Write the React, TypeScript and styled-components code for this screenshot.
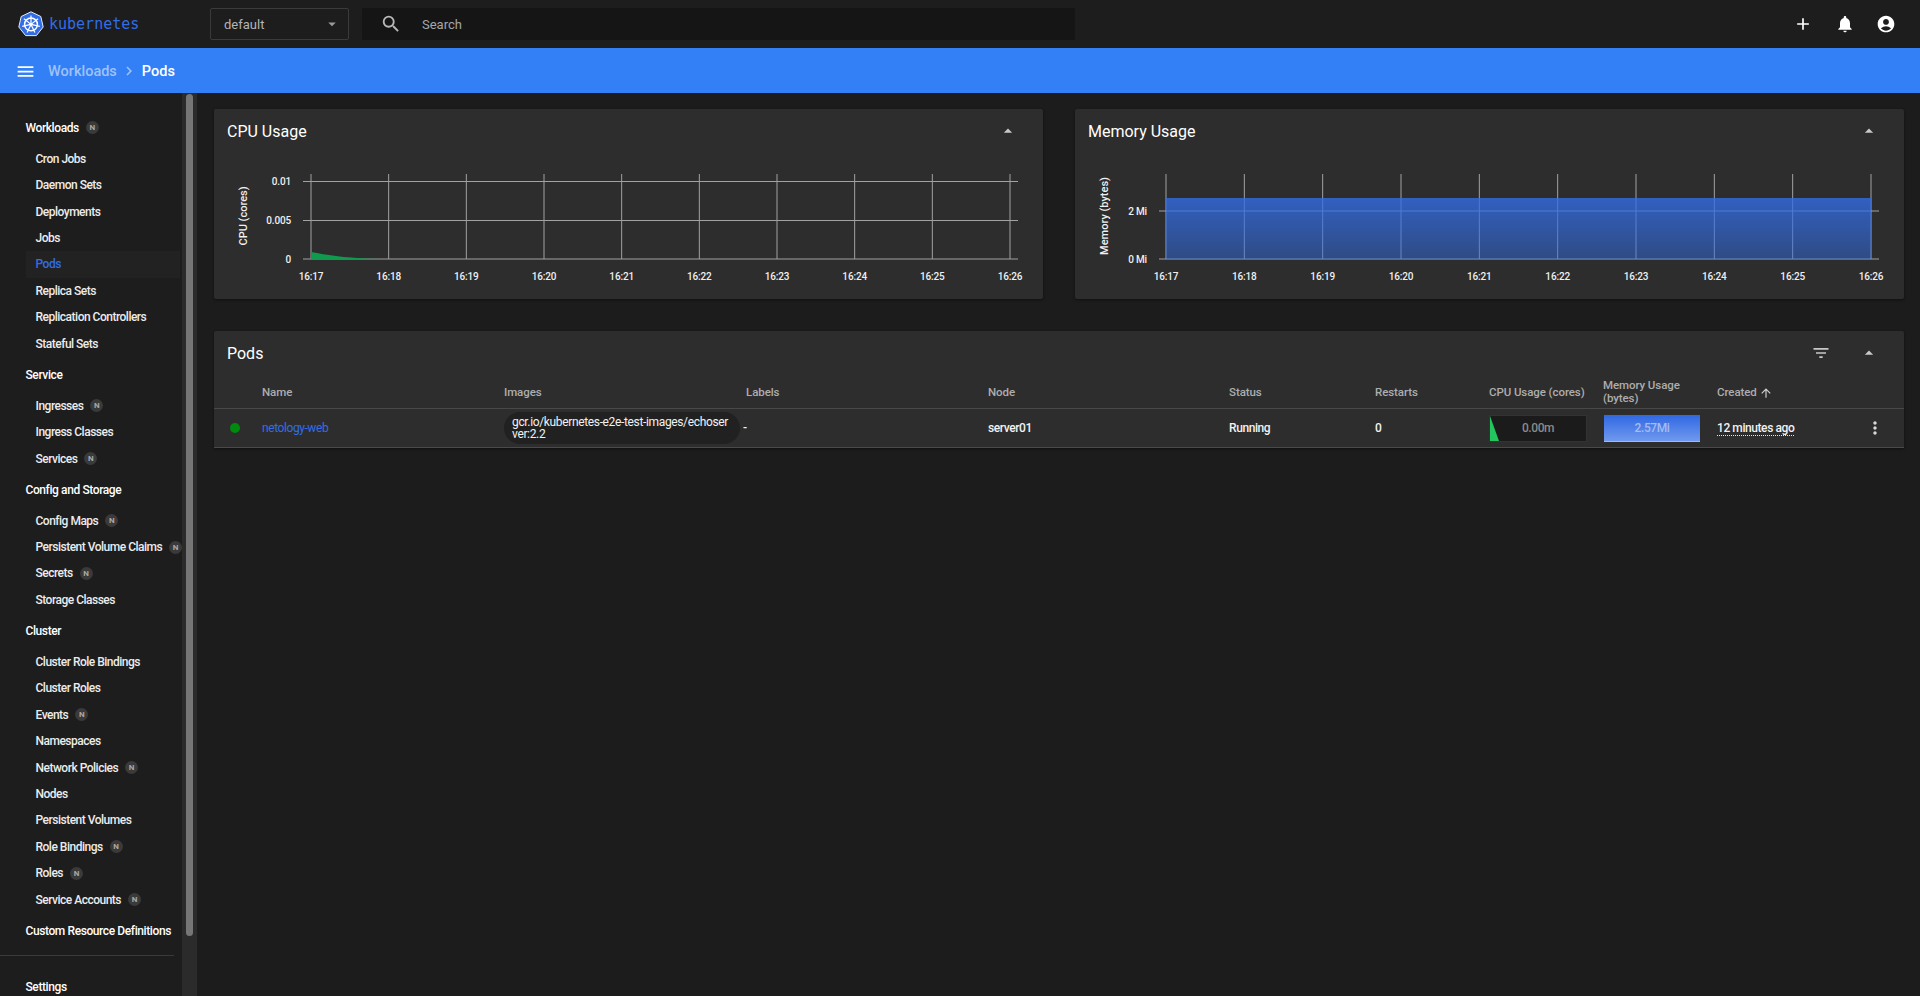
import React from "react";
import styled, { createGlobalStyle } from "styled-components";
import {
  MdAccountCircle,
  MdAdd,
  MdArrowDropDown,
  MdArrowDropUp,
  MdArrowUpward,
  MdChevronRight,
  MdFilterList,
  MdMenu,
  MdMoreVert,
  MdNotifications,
  MdSearch,
} from "react-icons/md";

const GlobalStyle = createGlobalStyle`
  html, body {
    margin: 0;
    height: 996px;
    overflow: hidden;
    background: #1c1c1c;
    font-family: Roboto, "Liberation Sans", sans-serif;
    color: #fff;
  }
  * { box-sizing: border-box; }
`;

const Page = styled.div`
  display: flex;
  flex-direction: column;
  height: 996px;
  overflow: hidden;
`;

const TopBar = styled.header`
  display: flex;
  align-items: center;
  height: 48px;
  flex: none;
  background: #1d1d1d;
`;

const Brand = styled.div`
  display: flex;
  align-items: center;
  gap: 5px;
  width: 210px;
  padding-left: 18px;
  flex: none;
  color: #326de6;
  font: 400 15px "DejaVu Sans Mono", monospace;
`;

const NamespaceSelect = styled.div`
  display: flex;
  align-items: center;
  justify-content: space-between;
  width: 139px;
  height: 32px;
  padding: 0 7px 0 13px;
  flex: none;
  border: 1px solid #3a3a3a;
  border-radius: 2px;
  font-size: 13px;
  color: #b4b4b4;
  svg { font-size: 18px; color: #9a9a9a; }
`;

const SearchBox = styled.div`
  display: flex;
  align-items: center;
  gap: 20px;
  width: 713px;
  height: 32px;
  margin-left: 13px;
  padding-left: 18px;
  flex: none;
  border-radius: 2px;
  background: #151515;
  font-size: 13px;
  color: #a6a6a6;
  svg { font-size: 22px; color: #b8b8b8; }
`;

const TopActions = styled.div`
  display: flex;
  align-items: center;
  gap: 21.5px;
  margin-left: auto;
  padding-right: 24px;
  font-size: 20px;
  svg { display: block; }
`;

const BreadcrumbBar = styled.div`
  display: flex;
  align-items: center;
  height: 45px;
  flex: none;
  padding: 1px 0 0 15px;
  background: #337ff5;
  font-size: 14.5px;
  font-weight: 500;
`;

const MenuButton = styled(MdMenu)`
  font-size: 21px;
  margin-right: 12px;
`;

const Crumb = styled.span<{ $current?: boolean }>`
  color: ${(p) => (p.$current ? "#fff" : "#9ec2fa")};
`;

const CrumbArrow = styled(MdChevronRight)`
  font-size: 18px;
  margin: 0 3.5px;
  color: #9ec2fa;
`;

const Body = styled.div`
  display: flex;
  flex: 1;
  min-height: 0;
`;

const Sidebar = styled.nav`
  width: 182px;
  flex: none;
  padding-top: 17px;
  background: #1d1d1d;
`;

const SectionTitle = styled.div<{ $spaced?: boolean }>`
  display: flex;
  align-items: center;
  height: 35.6px;
  padding-left: 25.5px;
  margin-top: ${(p) => (p.$spaced ? "14px" : "0")};
  font-size: 12px;
  font-weight: 500;
  letter-spacing: -0.4px;
`;

const NavItem = styled.div<{ $active?: boolean }>`
  display: flex;
  align-items: center;
  height: 26.43px;
  margin-left: 26px;
  width: 154px;
  padding-left: 9.5px;
  white-space: nowrap;
  font-size: 12px;
  font-weight: 500;
  letter-spacing: -0.5px;
  color: ${(p) => (p.$active ? "#326de6" : "#ececec")};
  background: ${(p) => (p.$active ? "#222222" : "transparent")};
`;

const NewBadge = styled.span`
  display: inline-flex;
  align-items: center;
  justify-content: center;
  width: 13px;
  height: 13px;
  margin-left: 7px;
  flex: none;
  border-radius: 50%;
  background: #3a3a3a;
  color: #a8a8a8;
  font-size: 8px;
  font-weight: 700;
  letter-spacing: 0;
`;

const NavRule = styled.hr`
  width: 174px;
  height: 1px;
  margin: 6px 0 0;
  border: 0;
  background: #3a3a3a;
`;

const ScrollTrack = styled.div`
  width: 15px;
  flex: none;
  padding: 1px 4px 0;
  background: #2b2b2b;
`;

const ScrollThumb = styled.div`
  height: 842px;
  border-radius: 4px;
  background: #767676;
`;

const Main = styled.main`
  flex: 1;
  min-width: 0;
  padding: 16px 16px 0 17px;
`;

const ChartGrid = styled.div`
  display: grid;
  grid-template-columns: 1fr 1fr;
  gap: 32px;
`;

const Card = styled.section`
  border-radius: 2px;
  background: #2d2d2d;
  box-shadow: 0 1px 3px rgba(0, 0, 0, 0.45);
`;

const ChartCard = styled(Card)`
  height: 190px;
`;

const CardHeader = styled.div`
  display: flex;
  align-items: center;
  justify-content: space-between;
  height: 44px;
  padding: 0 25px 0 13px;
  font-size: 16px;
  font-weight: 400;
`;

const CardTools = styled.div`
  display: flex;
  align-items: center;
  gap: 28px;
  font-size: 20px;
  color: #c8c8c8;
  svg { display: block; }
`;

const ChartArea = styled.svg`
  display: block;
  margin-top: 7px;
  text {
    font-family: Roboto, "Liberation Sans", sans-serif;
    font-size: 10px;
    font-weight: 500;
    letter-spacing: -0.15px;
    fill: #f0f0f0;
  }
`;

const AxisLabel = styled.text`
  font-size: 11px !important;
  letter-spacing: 0 !important;
`;

const PodsCard = styled(Card)`
  margin-top: 32px;
`;

const TableRow = styled.div`
  display: grid;
  grid-template-columns: 48px 242px 242px 242px 241px 146px 114px 114px 114px 114px 1fr;
  align-items: center;
`;

const HeadRow = styled(TableRow)`
  height: 34px;
  padding-top: 2px;
  border-bottom: 1px solid #484848;
  font-size: 11.5px;
  font-weight: 500;
  line-height: 13px;
  letter-spacing: -0.08px;
  color: #adadad;
`;

const HeadCellWrap = styled.div`
  width: 96px;
  margin-top: -2px;
`;

const SortCell = styled.div`
  display: flex;
  align-items: center;
  gap: 2px;
  svg { font-size: 14px; color: #d0d0d0; }
`;

const BodyRow = styled(TableRow)`
  height: 39px;
  border-bottom: 1px solid #4a4a4a;
  font-size: 12px;
  font-weight: 500;
  letter-spacing: -0.42px;
  color: #f2f2f2;
`;

const StatusDot = styled.span`
  display: block;
  width: 10px;
  height: 10px;
  margin-left: 16px;
  border-radius: 50%;
  background: #008a0e;
`;

const PodLink = styled.span`
  color: #326de6;
  font-weight: 400;
`;

const ImageChip = styled.div`
  width: 236px;
  height: 32px;
  padding: 4px 11px 4px 8px;
  border-radius: 16px;
  background: #212121;
  font-weight: 400;
  letter-spacing: -0.35px;
  line-height: 12px;
  word-break: break-all;
`;

const EmptyLabels = styled.span`
  margin-left: -3px;
`;

const CpuBar = styled.div`
  position: relative;
  display: flex;
  align-items: center;
  justify-content: center;
  width: 98px;
  height: 27px;
  border: 1px solid #333;
  background: #1b1b1b;
  color: #8a8a8a;
  svg { position: absolute; left: 0; top: 0; }
`;

const MemoryBar = styled.div`
  display: flex;
  align-items: center;
  justify-content: center;
  width: 96px;
  height: 27px;
  margin-left: 1px;
  border-bottom: 1px solid #9db9f2;
  background: linear-gradient(#3068e2, #7099ee);
  color: #a4bcf2;
`;

const CreatedAt = styled.span`
  border-bottom: 1px dotted #e8e8e8;
  line-height: 13px;
`;

const RowMenu = styled.div`
  display: flex;
  justify-content: flex-end;
  padding-right: 19px;
  font-size: 20px;
  color: #d8d8d8;
  svg { display: block; }
`;

type NavEntry = { label: string; isNew?: boolean; active?: boolean };
type NavSection = { title: string; isNew?: boolean; items: NavEntry[] };

const navSections: NavSection[] = [
  {
    title: "Workloads",
    isNew: true,
    items: [
      { label: "Cron Jobs" },
      { label: "Daemon Sets" },
      { label: "Deployments" },
      { label: "Jobs" },
      { label: "Pods", active: true },
      { label: "Replica Sets" },
      { label: "Replication Controllers" },
      { label: "Stateful Sets" },
    ],
  },
  {
    title: "Service",
    items: [
      { label: "Ingresses", isNew: true },
      { label: "Ingress Classes" },
      { label: "Services", isNew: true },
    ],
  },
  {
    title: "Config and Storage",
    items: [
      { label: "Config Maps", isNew: true },
      { label: "Persistent Volume Claims", isNew: true },
      { label: "Secrets", isNew: true },
      { label: "Storage Classes" },
    ],
  },
  {
    title: "Cluster",
    items: [
      { label: "Cluster Role Bindings" },
      { label: "Cluster Roles" },
      { label: "Events", isNew: true },
      { label: "Namespaces" },
      { label: "Network Policies", isNew: true },
      { label: "Nodes" },
      { label: "Persistent Volumes" },
      { label: "Role Bindings", isNew: true },
      { label: "Roles", isNew: true },
      { label: "Service Accounts", isNew: true },
    ],
  },
  { title: "Custom Resource Definitions", items: [] },
];

const times = ["16:17", "16:18", "16:19", "16:20", "16:21", "16:22", "16:23", "16:24", "16:25", "16:26"];

function KubeLogo() {
  const spokes = [0, 51.4, 102.8, 154.3, 205.7, 257.1, 308.6];
  return (
    <svg width="26" height="26" viewBox="0 0 26 26">
      <path
        d="M13 .8 22.8 5.5 25.2 16 18.4 24.6H7.6L.8 16 3.2 5.5Z"
        fill="#326de6"
        stroke="#e6ecfa"
        strokeWidth="1"
        strokeLinejoin="round"
      />
      <circle cx="13" cy="13.4" r="6.4" fill="none" stroke="#fff" strokeWidth="1.5" />
      <circle cx="13" cy="13.4" r="1.4" fill="#fff" />
      {spokes.map((a) => (
        <line key={a} x1="13" y1="13.4" x2="13" y2="4.4" stroke="#fff" strokeWidth="1.2" transform={`rotate(${a} 13 13.4)`} />
      ))}
    </svg>
  );
}

type ChartProps = {
  axisLabel: string;
  left: number;
  right: number;
  ruleStart: number;
  ruleEnd: number;
  labelRight: number;
  ticks: { y: number; label: string }[];
  children?: React.ReactNode;
};

const CHART_TOP = 14;
const CHART_BOTTOM = 99;

function UsageChart({ axisLabel, left, right, ruleStart, ruleEnd, labelRight, ticks, children }: ChartProps) {
  const step = (right - left) / (times.length - 1);
  return (
    <ChartArea width="829" height="139" viewBox="0 0 829 139">
      <g stroke="#a2a2a2" strokeWidth="1">
        {ticks.map((t) => (
          <line key={t.label} x1={ruleStart} x2={ruleEnd} y1={t.y} y2={t.y} />
        ))}
        {times.map((t, i) => (
          <line key={t} x1={left + i * step} x2={left + i * step} y1={CHART_TOP} y2={CHART_BOTTOM} />
        ))}
      </g>
      {children}
      {ticks.map((t) => (
        <text key={t.label} x={labelRight} y={t.y + 3.5} textAnchor="end">
          {t.label}
        </text>
      ))}
      {times.map((t, i) => (
        <text key={t} x={left + i * step} y={119.5} textAnchor="middle">
          {t}
        </text>
      ))}
      <AxisLabel transform="translate(33 56) rotate(-90)" textAnchor="middle">
        {axisLabel}
      </AxisLabel>
    </ChartArea>
  );
}

function CreatedCell() {
  return (
    <div>
      <CreatedAt>12 minutes ago</CreatedAt>
    </div>
  );
}

export default function App() {
  return (
    <Page>
      <GlobalStyle />
      <TopBar>
        <Brand>
          <KubeLogo />
          kubernetes
        </Brand>
        <NamespaceSelect>
          default
          <MdArrowDropDown />
        </NamespaceSelect>
        <SearchBox>
          <MdSearch />
          Search
        </SearchBox>
        <TopActions>
          <MdAdd />
          <MdNotifications />
          <MdAccountCircle />
        </TopActions>
      </TopBar>
      <BreadcrumbBar>
        <MenuButton />
        <Crumb>Workloads</Crumb>
        <CrumbArrow />
        <Crumb $current>Pods</Crumb>
      </BreadcrumbBar>
      <Body>
        <Sidebar>
          {navSections.map((section) => (
            <React.Fragment key={section.title}>
              <SectionTitle>
                {section.title}
                {section.isNew && <NewBadge>N</NewBadge>}
              </SectionTitle>
              {section.items.map((item) => (
                <NavItem key={item.label} $active={item.active}>
                  {item.label}
                  {item.isNew && <NewBadge>N</NewBadge>}
                </NavItem>
              ))}
            </React.Fragment>
          ))}
          <NavRule />
          <SectionTitle $spaced>Settings</SectionTitle>
        </Sidebar>
        <ScrollTrack>
          <ScrollThumb />
        </ScrollTrack>
        <Main>
          <ChartGrid>
            <ChartCard>
              <CardHeader>
                CPU Usage
                <CardTools>
                  <MdArrowDropUp />
                </CardTools>
              </CardHeader>
              <UsageChart
                axisLabel="CPU (cores)"
                left={97}
                right={796}
                ruleStart={89}
                ruleEnd={804}
                labelRight={77}
                ticks={[
                  { y: 21.5, label: "0.01" },
                  { y: 60.5, label: "0.005" },
                  { y: 99, label: "0" },
                ]}
              >
                <path d="M97 92 C118 96 140 99 175 99 L97 99Z" fill="#0f9a4e" />
              </UsageChart>
            </ChartCard>
            <ChartCard>
              <CardHeader>
                Memory Usage
                <CardTools>
                  <MdArrowDropUp />
                </CardTools>
              </CardHeader>
              <UsageChart
                axisLabel="Memory (bytes)"
                left={91}
                right={796}
                ruleStart={84}
                ruleEnd={804}
                labelRight={72}
                ticks={[
                  { y: 51, label: "2 Mi" },
                  { y: 99, label: "0 Mi" },
                ]}
              >
                <defs>
                  <linearGradient id="memFill" x1="0" x2="0" y1="0" y2="1">
                    <stop offset="0" stopColor="#326de6" stopOpacity="0.8" />
                    <stop offset="1" stopColor="#326de6" stopOpacity="0.47" />
                  </linearGradient>
                </defs>
                <rect x="91" y="38" width="705" height="61" fill="url(#memFill)" />
              </UsageChart>
            </ChartCard>
          </ChartGrid>
          <PodsCard>
            <CardHeader>
              Pods
              <CardTools>
                <MdFilterList />
                <MdArrowDropUp />
              </CardTools>
            </CardHeader>
            <HeadRow>
              <span />
              <span>Name</span>
              <span>Images</span>
              <span>Labels</span>
              <span>Node</span>
              <span>Status</span>
              <span>Restarts</span>
              <span>CPU Usage (cores)</span>
              <HeadCellWrap>Memory Usage (bytes)</HeadCellWrap>
              <SortCell>
                Created
                <MdArrowUpward />
              </SortCell>
            </HeadRow>
            <BodyRow>
              <StatusDot />
              <PodLink>netology-web</PodLink>
              <ImageChip>gcr.io/kubernetes-e2e-test-images/echoserver:2.2</ImageChip>
              <EmptyLabels>-</EmptyLabels>
              <span>server01</span>
              <span>Running</span>
              <span>0</span>
              <CpuBar>
                <svg width="12" height="25" viewBox="0 0 12 25">
                  <path d="M0 0 L9 25 H0Z" fill="#22c55e" />
                </svg>
                0.00m
              </CpuBar>
              <MemoryBar>2.57Mi</MemoryBar>
              <CreatedCell />
              <RowMenu>
                <MdMoreVert />
              </RowMenu>
            </BodyRow>
          </PodsCard>
        </Main>
      </Body>
    </Page>
  );
}
